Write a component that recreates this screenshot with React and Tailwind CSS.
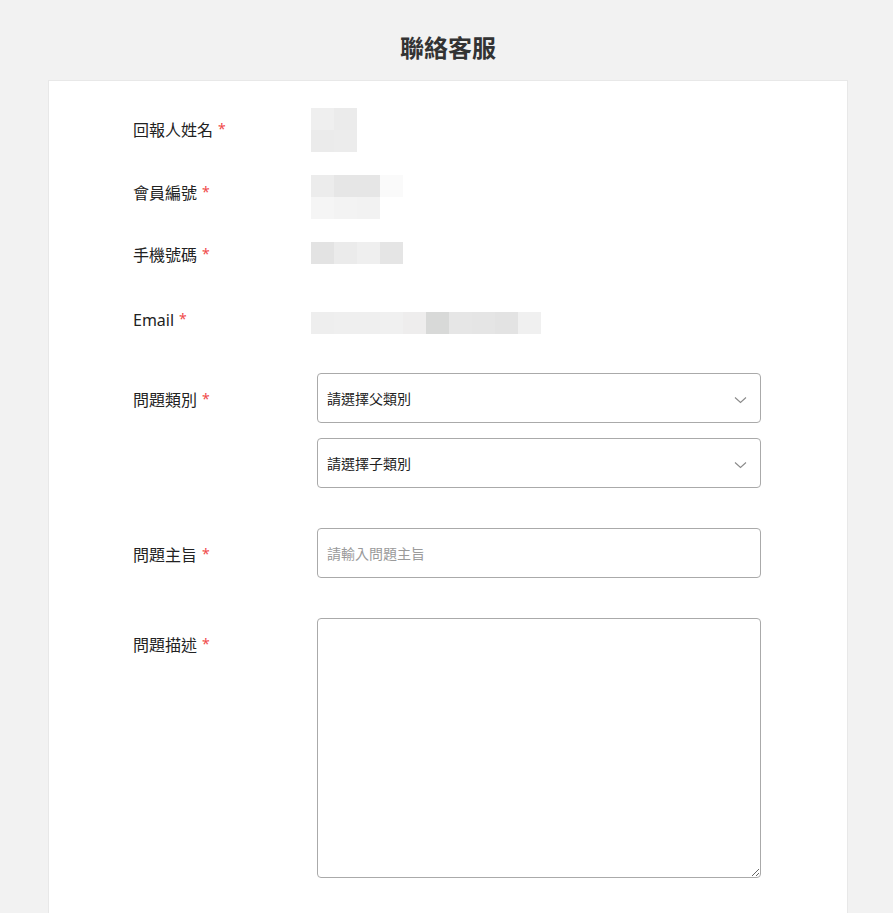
import React from "react";

const FONT = { fontFamily: '"Noto Sans", "Noto Sans CJK TC", sans-serif' };

function Blocks({ rows }) {
  return (
    <div className="flex flex-col">
      {rows.map((r, i) => (
        <div key={i} className="flex">
          {r.map((c, j) => (
            <div key={j} className="w-[23px] h-[22px]" style={{ backgroundColor: c }} />
          ))}
        </div>
      ))}
    </div>
  );
}

function Label({ text, mt }) {
  return (
    <div className={`w-[178px] h-[22px] shrink-0 flex items-center text-[16px] leading-[22px] text-[#222] ${mt}`}>
      <span>{text}</span>
      <span className="ml-[5px] text-[14px] leading-[14px] text-[#f04a4a] -mt-[2px]">*</span>
    </div>
  );
}

function Chevron() {
  return (
    <svg width="13" height="8" viewBox="0 0 13 8" className="absolute right-[13px] top-[22px]">
      <path d="M1 1.5 L6.5 6.5 L12 1.5" fill="none" stroke="#8a8a8a" strokeWidth="1.1" />
    </svg>
  );
}

function Select({ text }) {
  return (
    <div className="relative w-[444px] h-[50px] rounded-[4px] border border-[#aaaaaa] bg-white flex items-center pl-[9px] text-[14px] text-[#222]">
      {text}
      <Chevron />
    </div>
  );
}

export default function App() {
  return (
    <div className="min-h-screen bg-[#f2f2f2]" style={FONT}>
      <div className="ml-[48px] w-[800px]">
        <div className="pt-[32px] h-[80px] text-center">
          <h1 className="text-[24px] leading-[32px] font-semibold text-[#333]">聯絡客服</h1>
        </div>
        <div className="bg-white border border-[#e8e8e8] h-[900px] pl-[84px] pt-[27px]">
          <div className="flex">
            <Label text="回報人姓名" mt="mt-[11px]" />
            <Blocks rows={[["#efefef", "#ebebeb"], ["#ebebeb", "#ececec"]]} />
          </div>
          <div className="flex mt-[23px]">
            <Label text="會員編號" mt="mt-[7px]" />
            <Blocks
              rows={[
                ["#ececec", "#e6e6e6", "#e6e6e6", "#fafafa"],
                ["#f5f5f5", "#f3f3f3", "#f2f2f2", "#ffffff"],
              ]}
            />
          </div>
          <div className="flex mt-[23px]">
            <Label text="手機號碼" mt="mt-[2px]" />
            <div className="h-[23px] flex">
              <Blocks rows={[["#e3e3e3", "#ebebeb", "#efefef", "#e5e5e5"]]} />
            </div>
          </div>
          <div className="flex mt-[43px] h-[26px]">
            <Label text="Email" mt="mt-0" />
            <div className="mt-[3px]">
              <Blocks
                rows={[
                  ["#eeeeee", "#efefef", "#efefef", "#f0f0f0", "#eeeded", "#d8d9d8", "#e6e6e6", "#e5e5e5", "#e3e3e3", "#f0f0f0"],
                ]}
              />
            </div>
          </div>
          <div className="flex mt-[38px]">
            <Label text="問題類別" mt="mt-[16px]" />
            <div className="ml-[6px] flex flex-col gap-[15px]">
              <Select text="請選擇父類別" />
              <Select text="請選擇子類別" />
            </div>
          </div>
          <div className="flex mt-[40px]">
            <Label text="問題主旨" mt="mt-[16px]" />
            <input
              className="ml-[6px] w-[444px] h-[50px] rounded-[4px] border border-[#aaaaaa] px-[9px] text-[14px] outline-none placeholder:text-[#9a9a9a]"
              placeholder="請輸入問題主旨"
              style={FONT}
            />
          </div>
          <div className="flex mt-[40px]">
            <Label text="問題描述" mt="mt-[16px]" />
            <textarea
              className="ml-[6px] w-[444px] h-[260px] rounded-[4px] border border-[#aaaaaa] p-[9px] text-[14px] outline-none"
              style={FONT}
            />
          </div>
        </div>
      </div>
    </div>
  );
}
